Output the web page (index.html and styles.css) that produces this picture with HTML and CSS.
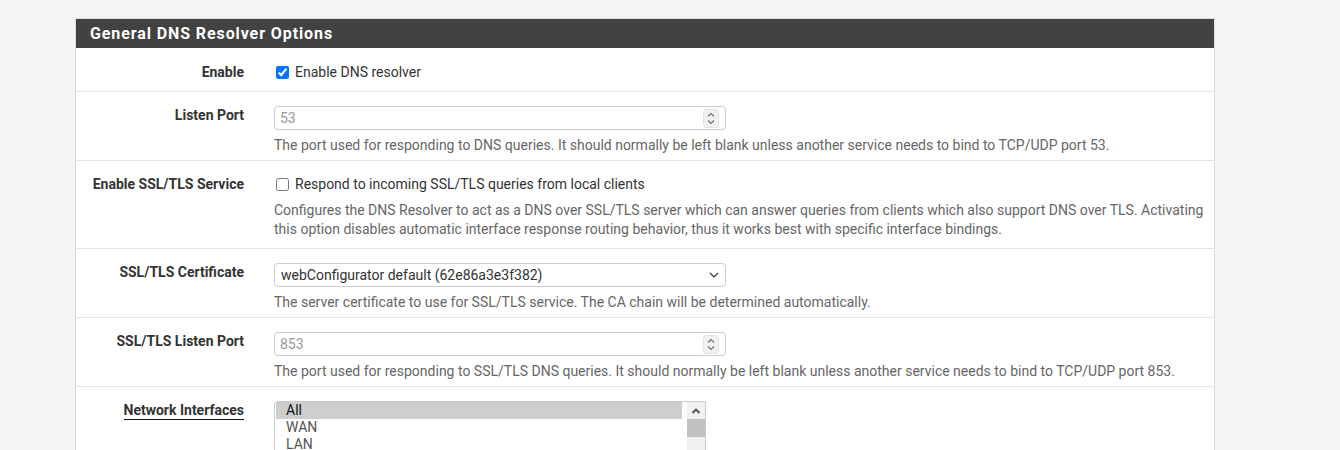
FILE: index.html
```html
<!DOCTYPE html>
<html lang="en">
<head>
    <meta charset="UTF-8">
    <title>Services: DNS Resolver: General Settings</title>
    <link rel="stylesheet" href="styles.css">
</head>
<body>
    <div class="panel">
        <div class="panel-heading">
            <h2 class="panel-title">General DNS Resolver Options</h2>
        </div>
        <div class="panel-body">
            <div class="form-group check-row">
                <div class="form-label">Enable</div>
                <div class="form-field">
                    <label class="check"><input type="checkbox" checked> Enable DNS resolver</label>
                </div>
            </div>

            <div class="form-group">
                <div class="form-label">Listen Port</div>
                <div class="form-field">
                    <div class="form-control">
                        <input type="text" placeholder="53">
                        <svg class="spinner" width="16" height="19" viewBox="0 0 16 19">
                            <rect x="0.5" y="0.5" width="15" height="18" rx="3" fill="#f1f1f1" stroke="#e2e2e2"/>
                            <path d="M5 7.5 L8 4.5 L11 7.5" fill="none" stroke="#6f6f6f" stroke-width="1.1"/>
                            <path d="M5 11.5 L8 14.5 L11 11.5" fill="none" stroke="#6f6f6f" stroke-width="1.1"/>
                        </svg>
                    </div>
                    <div class="help">The port used for responding to DNS queries. It should normally be left blank unless another service needs to bind to TCP/UDP port 53.</div>
                </div>
            </div>

            <div class="form-group">
                <div class="form-label">Enable SSL/TLS Service</div>
                <div class="form-field">
                    <label class="check"><input type="checkbox"> Respond to incoming SSL/TLS queries from local clients</label>
                    <div class="help help-check">Configures the DNS Resolver to act as a DNS over SSL/TLS server which can answer queries from clients which also support DNS over TLS. Activating this option disables automatic interface response routing behavior, thus it works best with specific interface bindings.</div>
                </div>
            </div>

            <div class="form-group">
                <div class="form-label">SSL/TLS Certificate</div>
                <div class="form-field">
                    <div class="form-control">
                        <select>
                            <option>webConfigurator default (62e86a3e3f382)</option>
                        </select>
                        <svg class="caret" width="10" height="6" viewBox="0 0 10 6">
                            <path d="M1 1 L5 5 L9 1" fill="none" stroke="#333" stroke-width="1.2"/>
                        </svg>
                    </div>
                    <div class="help">The server certificate to use for SSL/TLS service. The CA chain will be determined automatically.</div>
                </div>
            </div>

            <div class="form-group">
                <div class="form-label">SSL/TLS Listen Port</div>
                <div class="form-field">
                    <div class="form-control">
                        <input type="text" placeholder="853">
                        <svg class="spinner" width="16" height="19" viewBox="0 0 16 19">
                            <rect x="0.5" y="0.5" width="15" height="18" rx="3" fill="#f1f1f1" stroke="#e2e2e2"/>
                            <path d="M5 7.5 L8 4.5 L11 7.5" fill="none" stroke="#6f6f6f" stroke-width="1.1"/>
                            <path d="M5 11.5 L8 14.5 L11 11.5" fill="none" stroke="#6f6f6f" stroke-width="1.1"/>
                        </svg>
                    </div>
                    <div class="help">The port used for responding to SSL/TLS DNS queries. It should normally be left blank unless another service needs to bind to TCP/UDP port 853.</div>
                </div>
            </div>

            <div class="form-group">
                <div class="form-label"><span class="required">Network Interfaces</span></div>
                <div class="form-field">
                    <div class="listbox">
                        <ul class="options">
                            <li class="selected">All</li>
                            <li>WAN</li>
                            <li>LAN</li>
                            <li>OPT1</li>
                            <li>OPT2</li>
                        </ul>
                        <div class="scrollbar">
                            <div class="scroll-btn">
                                <svg width="10" height="6" viewBox="0 0 10 6">
                                    <path d="M1.5 5 L5 1.5 L8.5 5" fill="none" stroke="#505050" stroke-width="1.8"/>
                                </svg>
                            </div>
                            <div class="scroll-thumb"></div>
                            <div class="scroll-track"></div>
                        </div>
                    </div>
                </div>
            </div>
        </div>
    </div>
</body>
</html>
```

FILE: styles.css
```css
html, body {
    overflow: hidden;
}

body {
    margin: 0;
    padding: 18px 0 0 75px;
    background: #f4f4f4;
    font-family: Roboto, 'Liberation Sans', sans-serif;
    color: #212121;
}

.panel {
    width: 1138px;
    background: #fff;
    border: 1px solid #dddddd;
}

.panel-heading {
    background: #424242;
    height: 29px;
    display: flex;
    align-items: center;
    padding: 0 14px;
}

.panel-title {
    margin: 0;
    color: #fff;
    font-size: 16px;
    font-weight: 700;
    letter-spacing: 0.9px;
}

.form-group {
    display: flex;
    padding: 14px 7px 5px 0;
    border-bottom: 1px solid #e4e4e4;
}

.check-row {
    padding: 15px 7px 10px 0;
}

.form-label {
    width: 168px;
    padding-right: 15px;
    text-align: right;
    font-size: 14px;
    font-weight: 700;
    line-height: 18px;
    color: #333;
}

.required {
    border-bottom: 1px solid #111;
    padding-bottom: 1px;
}

.form-field {
    flex: 1;
    padding-left: 15px;
}

.check {
    display: flex;
    align-items: center;
    font-size: 14px;
    line-height: 18px;
    color: #333;
}

.check input {
    margin: 0 6px 0 2px;
    width: 13px;
    height: 13px;
}

.form-control {
    display: flex;
    align-items: center;
    box-sizing: border-box;
    width: 452px;
    height: 24px;
    border: 1px solid #cccccc;
    border-radius: 4px;
    background: #fff;
}

.form-control input,
.form-control select {
    flex: 1;
    min-width: 0;
    height: 100%;
    border: none;
    outline: none;
    background: transparent;
    padding: 0 5px;
    font-family: Roboto, 'Liberation Sans', sans-serif;
    font-size: 14px;
    color: #333;
    appearance: none;
}

.form-control select {
    padding: 0 6px;
}

.form-control input::placeholder {
    color: #999;
}

.spinner {
    margin-right: 6px;
}

.caret {
    margin-right: 6px;
}

.help {
    margin-top: 6px;
    font-size: 14px;
    line-height: 19px;
    color: #666;
}

.help-check {
    margin: 8px 0 4px;
}

.listbox {
    display: flex;
    box-sizing: border-box;
    width: 432px;
    border: 1px solid #cccccc;
    border-radius: 4px 0 0 0;
    padding: 0 0 0 1px;
    font-size: 14px;
    color: #555;
}

.options {
    flex: 1;
    list-style: none;
    margin: 0;
    padding: 0;
}

.options li {
    padding: 0 10px;
    line-height: 17px;
}

.options li.selected {
    background: #cecece;
    color: #111;
    margin-right: 5px;
}

.scrollbar {
    width: 18px;
    display: flex;
    flex-direction: column;
    background: #f1f1f1;
}

.scroll-btn {
    height: 17px;
    display: flex;
    align-items: center;
    justify-content: center;
}

.scroll-thumb {
    height: 18px;
    background: #c1c1c1;
}

.scroll-track {
    flex: 1;
}
```
